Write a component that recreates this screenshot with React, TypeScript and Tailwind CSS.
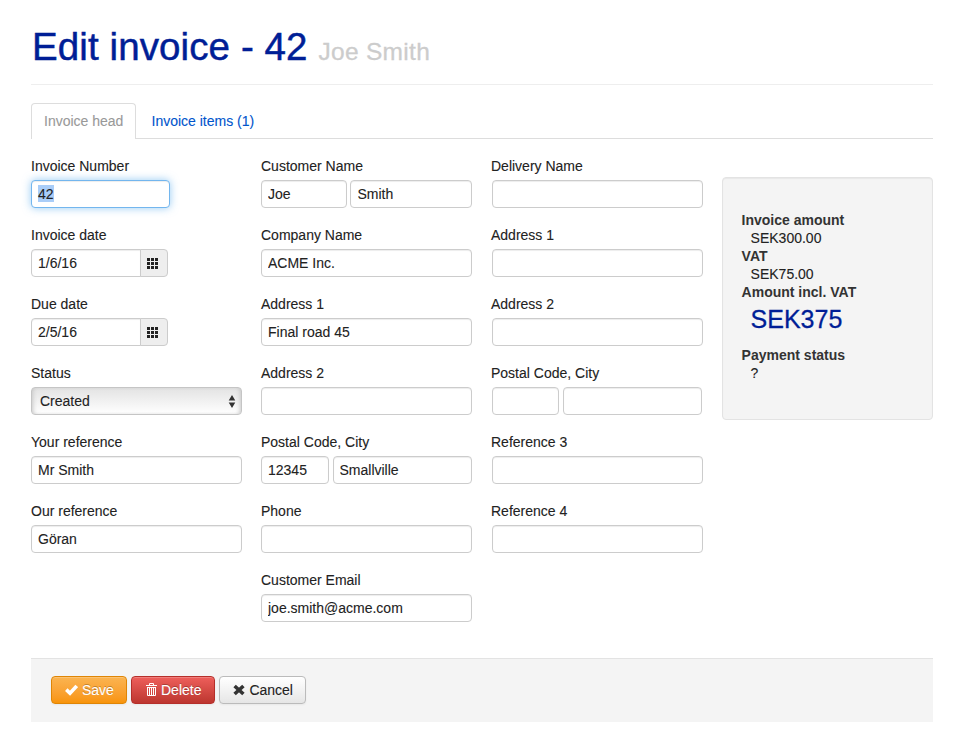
import React from "react";

type BoxProps = { value?: string; className?: string };

function Box({ value = "", className = "w-full" }: BoxProps) {
  return (
    <input
      type="text"
      defaultValue={value}
      className={`h-7 min-w-0 rounded-[4px] border border-[#cccccc] bg-white px-1.5 text-sm leading-5 text-[#222222] shadow-[inset_0_1px_1px_rgba(0,0,0,0.075)] outline-none ${className}`}
    />
  );
}

function Field({ label, children }: { label: string; children: React.ReactNode }) {
  return (
    <div className="h-[69px]">
      <label className="mb-[5px] block h-5 text-sm leading-[22px]">{label}</label>
      <div className="flex">{children}</div>
    </div>
  );
}

const gridCells = [0, 4, 8];

function DateBox({ value }: { value: string }) {
  return (
    <>
      <Box value={value} className="w-[110px] rounded-r-none" />
      <span className="-ml-px flex h-7 w-7 items-center justify-center rounded-r-[4px] border border-[#cccccc] bg-[#eeeeee] pr-[3px] pt-px">
        <svg width="11" height="11" viewBox="0 0 11 11" fill="#222222" shapeRendering="crispEdges">
          {gridCells.map((y) =>
            gridCells.map((x) => <rect key={`${x}-${y}`} x={x} y={y} width="3" height="3" />)
          )}
        </svg>
      </span>
    </>
  );
}

export default function App() {
  return (
    <div className="h-[751px] w-[969px] bg-white pl-[31px] pr-9 font-['Liberation_Sans',Arial,sans-serif] text-sm text-[#222222] [-webkit-text-stroke:0.1px_currentColor]">
      <header className="h-[85px] border-b border-[#eeeeee] pt-[27px]">
        <h1 className="ml-px whitespace-nowrap text-[38.5px] leading-10 tracking-[0.1px] text-[#001e96] [-webkit-text-stroke:0.5px_currentColor]">
          Edit invoice - 42 <small className="text-[24.5px] tracking-[0.3px] text-[#cccccc] [-webkit-text-stroke:0.3px_currentColor]">Joe Smith</small>
        </h1>
      </header>

      <nav className="mt-[18px] flex h-9 border-b border-[#dddddd] leading-[34px]">
        <span className="h-9 w-[105px] rounded-t-[4px] border border-b-0 border-[#dddddd] bg-white pl-3 text-[#999999]">
          Invoice head
        </span>
        <span className="ml-[15.5px] pt-px text-[#0055cc]">Invoice items (1)</span>
      </nav>

      <main className="mt-4 grid h-[503px] grid-cols-[211px_211px_212px_211px] gap-x-[19px]">
        <section>
          <Field label="Invoice Number">
            <div className="flex h-7 w-[139px] items-center rounded-[4px] border border-[#73b6ee] bg-white px-1.5 shadow-[inset_0_1px_1px_rgba(0,0,0,0.075),0_0_8px_rgba(82,168,236,0.6)]">
              <span className="-mt-px h-[17px] bg-[#a9cdf8] leading-[18px]">42</span>
            </div>
          </Field>
          <Field label="Invoice date"><DateBox value="1/6/16" /></Field>
          <Field label="Due date"><DateBox value="2/5/16" /></Field>
          <Field label="Status">
            <div className="flex h-7 w-full items-center justify-between rounded-[4px] border border-[#c5c5c5] bg-linear-to-b from-[#e3e3e3] to-white pl-2 pr-[5px] shadow-[inset_3px_0_4px_-2px_#c8c8c8,inset_-3px_0_4px_-2px_#c8c8c8]">
              <span>Created</span>
              <svg width="8" height="13" viewBox="0 0 8 13" fill="#333333">
                <path d="M4 0 7.3 5.5H.7ZM.7 7.5H7.3L4 13Z" />
              </svg>
            </div>
          </Field>
          <Field label="Your reference"><Box value="Mr Smith" /></Field>
          <Field label="Our reference"><Box value="Göran" /></Field>
        </section>

        <section>
          <Field label="Customer Name">
            <Box value="Joe" className="w-[86px]" />
            <Box value="Smith" className="ml-[3px] w-[122px] pl-[6.5px]" />
          </Field>
          <Field label="Company Name"><Box value="ACME Inc." /></Field>
          <Field label="Address 1"><Box value="Final road 45" /></Field>
          <Field label="Address 2"><Box /></Field>
          <Field label="Postal Code, City">
            <Box value="12345" className="w-[68px]" />
            <Box value="Smallville" className="ml-1 w-[139px] pl-[5.5px]" />
          </Field>
          <Field label="Phone"><Box /></Field>
          <Field label="Customer Email"><Box value="joe.smith@acme.com" /></Field>
        </section>

        <section>
          <Field label="Delivery Name"><Box className="ml-px w-[211px]" /></Field>
          <Field label="Address 1"><Box className="ml-px w-[211px]" /></Field>
          <Field label="Address 2"><Box className="ml-px w-[211px]" /></Field>
          <Field label="Postal Code, City">
            <Box className="ml-px w-[67px]" />
            <Box className="ml-1 w-[139px]" />
          </Field>
          <Field label="Reference 3"><Box className="ml-px w-[211px]" /></Field>
          <Field label="Reference 4"><Box className="ml-px w-[211px]" /></Field>
        </section>

        <aside className="mt-[22px] h-[243px] rounded-[4px] border border-[#e3e3e3] bg-[#f4f4f4] pl-[18.6px] pt-[33px] leading-[18px] shadow-[inset_0_1px_1px_rgba(0,0,0,0.05)]">
          <dl>
            <dt className="font-bold text-[#333333] [-webkit-text-stroke:0]">Invoice amount</dt>
            <dd className="ml-[9px]">SEK300.00</dd>
            <dt className="font-bold text-[#333333] [-webkit-text-stroke:0]">VAT</dt>
            <dd className="ml-[9px]">SEK75.00</dd>
            <dt className="font-bold text-[#333333] [-webkit-text-stroke:0]">Amount incl. VAT</dt>
            <dd className="ml-[9px] h-[45px] text-[25px] leading-9 text-[#001e96] [-webkit-text-stroke:0.3px_currentColor]">SEK375</dd>
            <dt className="font-bold text-[#333333] [-webkit-text-stroke:0]">Payment status</dt>
            <dd className="ml-[9px]">?</dd>
          </dl>
        </aside>
      </main>

      <footer className="flex h-16 gap-1 border-t border-[#e3e3e3] bg-[#f4f4f4] pl-5 pt-[17px]">
        <button className="flex h-7 w-[76px] items-center rounded-[4px] border border-[#df8505] bg-linear-to-b from-[#fbb450] to-[#f89406] pl-[13px] text-white shadow-[inset_0_1px_0_rgba(255,255,255,0.2),0_1px_2px_rgba(0,0,0,0.05)] [text-shadow:0_-1px_0_rgba(0,0,0,0.25)]">
          <svg width="13" height="12" viewBox="0 0 13 12" className="mr-1" fill="none" stroke="white" strokeWidth="3.6">
            <path d="M1.3 5.6 5 9.2 11.7 1.9" />
          </svg>
          Save
        </button>
        <button className="flex h-7 w-[84px] items-center rounded-[4px] border border-[#b52f2a] bg-linear-to-b from-[#ee5f5b] to-[#bd362f] pl-3.5 text-white shadow-[inset_0_1px_0_rgba(255,255,255,0.2),0_1px_2px_rgba(0,0,0,0.05)] [text-shadow:0_-1px_0_rgba(0,0,0,0.25)]">
          <svg width="11" height="13" viewBox="0 0 11 13" className="-mt-px mr-1" fill="none" stroke="white">
            <path d="M0 2.5H11M3.5 2V.5H7.5V2M1.5 4V12.5H9.5V4M1 4.5H10M3.5 5V12M5.5 5V12M7.5 5V12" />
          </svg>
          Delete
        </button>
        <button className="flex h-7 w-[87px] items-center rounded-[4px] border border-[#bbbbbb] bg-linear-to-b from-white to-[#e6e6e6] pl-[13px] text-[#222222] shadow-[inset_0_1px_0_rgba(255,255,255,0.2),0_1px_2px_rgba(0,0,0,0.05)]">
          <svg width="12" height="12" viewBox="0 0 12 12" className="mr-[4.4px]" fill="none" stroke="#333333" strokeWidth="3.6">
            <path d="M1.6 2 10.4 10M10.4 2 1.6 10" />
          </svg>
          Cancel
        </button>
      </footer>
    </div>
  );
}
